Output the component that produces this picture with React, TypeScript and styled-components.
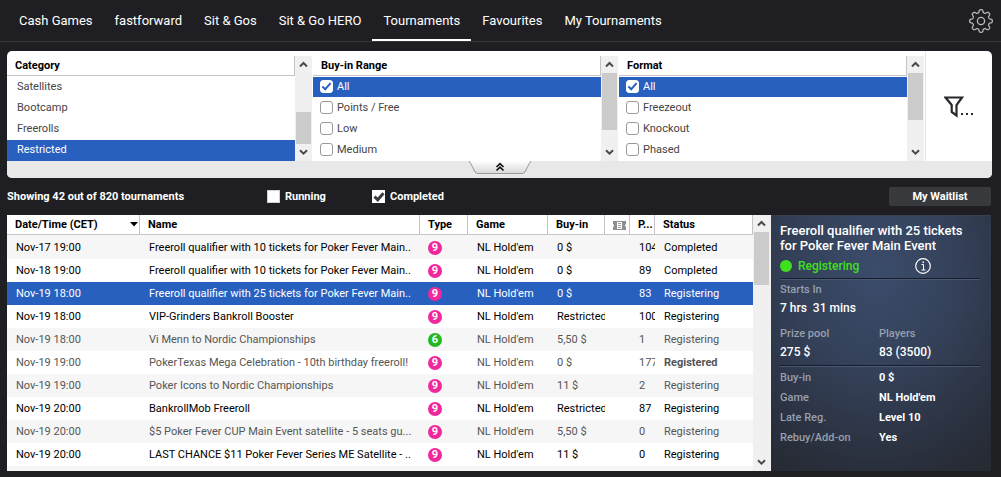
import React from "react";
import styled, { createGlobalStyle, css } from "styled-components";

const GlobalStyle = createGlobalStyle`
  *, *::before, *::after { box-sizing: border-box; }
  body {
    margin: 0;
    background: #1f1f23;
    color: #fff;
    font-family: Roboto, "Liberation Sans", sans-serif;
    font-size: 12px;
  }
  button, input { font: inherit; margin: 0; }
  button { border: 0; padding: 0; background: none; color: inherit; cursor: pointer; }
`;

const blue = "#2860c0";

const Page = styled.div`
  display: flex;
  flex-direction: column;
  height: 100vh;
  padding-bottom: 6px;
`;

/* ---------- navigation ---------- */

const TopBar = styled.header`
  display: flex;
  align-items: stretch;
  justify-content: space-between;
  flex: none;
  height: 42px;
  padding: 0 8px;
  border-bottom: 1px solid #37373b;
`;

const Tabs = styled.nav`
  display: flex;
`;

const Tab = styled.a<{ $active?: boolean }>`
  display: flex;
  align-items: center;
  padding: 1px 11px 0;
  border-bottom: 2px solid ${(p) => (p.$active ? "#fff" : "transparent")};
  color: #fff;
  font-size: 13px;
  text-decoration: none;
  white-space: nowrap;
`;

const IconButton = styled.button`
  display: grid;
  place-items: center;
`;

/* ---------- scroll bar ---------- */

const Bar = styled.div`
  display: flex;
  flex-direction: column;
  flex: none;
  width: 17px;
  padding: 0 1px;
  background: #f0f0f0;
`;

const BarButton = styled.button`
  display: grid;
  place-items: center;
  flex: none;
  height: 17px;
`;

const Track = styled.div<{ $end?: boolean }>`
  display: flex;
  flex: 1;
  flex-direction: column;
  justify-content: ${(p) => (p.$end ? "flex-end" : "flex-start")};
`;

const Thumb = styled.div<{ $size: number }>`
  height: ${(p) => p.$size}px;
  background: #cbcbcb;
`;

const Chevron = ({ down = false }: { down?: boolean }) => (
  <svg width="9" height="7" viewBox="0 0 9 7" aria-hidden="true">
    <path
      d={down ? "M1 1.2 4.5 4.7 8 1.2" : "M1 5.5 4.5 2 8 5.5"}
      fill="none"
      stroke="#4a4a4a"
      strokeWidth="2"
    />
  </svg>
);

function ScrollBar({ size, end }: { size: number; end?: boolean }) {
  return (
    <Bar>
      <BarButton aria-label="Scroll up">
        <Chevron />
      </BarButton>
      <Track $end={end}>
        <Thumb $size={size} />
      </Track>
      <BarButton aria-label="Scroll down">
        <Chevron down />
      </BarButton>
    </Bar>
  );
}

/* ---------- filters ---------- */

const FilterPanel = styled.section`
  flex: none;
  margin: 9px 9px 0 7px;
  border-radius: 5px;
  background: #fff;
  color: #444;
  overflow: hidden;
`;

const FilterColumns = styled.div`
  display: grid;
  grid-template-columns: repeat(3, minmax(0, 1fr)) 67px;
  height: 110px;
`;

const FilterColumn = styled.div`
  display: flex;
  padding: 5px 1px 0 0;
`;

const FilterList = styled.fieldset`
  flex: 1;
  min-width: 0;
  margin: 0;
  padding: 0;
  border: 0;
`;

const FilterTitle = styled.div`
  height: 20px;
  padding-left: 8px;
  border-right: 1px solid #c4c4cc;
  border-bottom: 1px solid #c4c4cc;
  color: #000;
  font-size: 11px;
  font-weight: 700;
  line-height: 19px;
`;

const selectable = css<{ $selected?: boolean }>`
  display: flex;
  align-items: center;
  width: 100%;
  height: 21px;
  background: ${(p) => (p.$selected ? blue : "transparent")};
  color: ${(p) => (p.$selected ? "#fff" : "#444")};
  font-size: 11px;
`;

const CategoryList = styled.div`
  padding-top: 1px;
`;

const CategoryRow = styled.button<{ $selected?: boolean }>`
  ${selectable}
  padding: 0 10px 2px;
`;

const CheckRow = styled.label<{ $selected?: boolean }>`
  ${selectable}
  gap: 4px;
  padding: 0 7px 2px;
  background-clip: padding-box;
  border-top: 1px solid transparent;
`;

const CheckBox = styled.input`
  display: grid;
  place-items: center;
  flex: none;
  appearance: none;
  width: 13px;
  height: 13px;
  border: 1px solid #9a9a9a;
  border-radius: 3px;
  background: #fff;

  &:checked {
    border-color: #fff;
  }
  &:checked::after {
    content: "";
    width: 5px;
    height: 9px;
    border: solid ${blue};
    border-width: 0 2px 2px 0;
    transform: translateY(-1px) rotate(42deg);
  }
`;

const FilterMore = styled.button`
  display: grid;
  place-items: center;
  border-left: 1px solid #e4e4e4;
`;

const FilterFoot = styled.div`
  display: flex;
  justify-content: center;
  height: 17px;
  background: #e8e8e8;
`;

const CollapseButton = styled.button`
  height: 14px;
  line-height: 0;
`;

/* ---------- summary row ---------- */

const SummaryRow = styled.div`
  display: grid;
  grid-template-columns: 260px 105px 1fr auto;
  align-items: center;
  flex: none;
  height: 37px;
  padding: 0 10px 0 7px;
  font-size: 11px;
  font-weight: 700;
`;

const SquareLabel = styled.label`
  display: flex;
  align-items: center;
  gap: 5px;
`;

const SquareBox = styled(CheckBox)`
  border: 1px solid #d0d0d0;
  border-radius: 0;

  &:checked::after {
    width: 6px;
    height: 10px;
    border-color: #3c3c40;
    border-width: 0 3px 3px 0;
  }
`;

const WaitlistButton = styled.button`
  width: 102px;
  height: 19px;
  border-radius: 2px;
  background: #38393d;
  font-weight: 700;
`;

/* ---------- tournament table ---------- */

const Main = styled.main`
  display: grid;
  grid-template-columns: minmax(0, 1fr) 220px;
  flex: 1;
  min-height: 0;
  padding: 0 10px 0 7px;
`;

const TablePane = styled.section`
  display: flex;
  min-height: 0;
  padding-right: 1px;
  background: #f0f0f0;
  overflow: hidden;
`;

const TableScroll = styled.div`
  flex: 1;
  min-width: 0;
  background: #fff;
  overflow: hidden;
`;

const Table = styled.table`
  width: 100%;
  table-layout: fixed;
  border-collapse: separate;
  border-spacing: 0;
`;

const Th = styled.th`
  height: 20px;
  padding: 0 0 0 8px;
  border-right: 1px solid #c4c4cc;
  border-bottom: 1px solid #c4c4cc;
  background: #fff;
  color: #000;
  font-size: 11px;
  font-weight: 700;
  text-align: left;
  white-space: nowrap;
  overflow: hidden;
`;

const TicketHead = styled(Th)`
  padding-top: 2px;
`;

const SortHead = styled.span`
  display: flex;
  align-items: center;
  justify-content: space-between;
  padding-right: 1px;
`;

const Td = styled.td<{ $bold?: boolean }>`
  height: 23px;
  padding: 0 0 0 9px;
  font-size: 11px;
  font-weight: ${(p) => (p.$bold ? 700 : 400)};
  line-height: 21px;
  white-space: nowrap;
  overflow: hidden;
`;

const Tr = styled.tr<{ $tone: "black" | "grey" | "selected" }>`
  color: ${(p) => ({ black: "#000", grey: "#555", selected: "#fff" })[p.$tone]};
  background: ${(p) => (p.$tone === "selected" ? blue : "#fff")};
  &:nth-child(odd) {
    background: ${(p) => (p.$tone === "selected" ? blue : "#f6f6f6")};
  }
  &:first-child > ${Td} {
    height: 24px;
    padding-top: 1px;
  }
`;

const Badge = styled.span<{ $green?: boolean }>`
  display: grid;
  place-items: center;
  width: 14px;
  height: 14px;
  margin-left: -1px;
  border-radius: 50%;
  background: ${(p) => (p.$green ? "#22b822" : "#f0289c")};
  color: #fff;
  font-size: 11px;
  font-weight: 700;
  line-height: 14px;
`;

/* ---------- details ---------- */

const Details = styled.aside`
  padding: 7px 11px 8px 9px;
  border-top: 1px solid #39404d;
  background: radial-gradient(ellipse 190px 230px at 48% 22%, #3b4c6b 0%, #344058 45%, #292f3c 85%, #262a33 100%);
  font-weight: 500;
  overflow: hidden;
`;

const DetailTitle = styled.h2`
  margin: 0;
  font-size: 13px;
  font-weight: 500;
  line-height: 15px;
  white-space: nowrap;
`;

const StateRow = styled.div`
  display: flex;
  align-items: center;
  gap: 6px;
  height: 25px;
  color: #3fe01c;
`;

const Dot = styled.span`
  width: 12px;
  height: 12px;
  border-radius: 50%;
  background: #3fe01c;
`;

const StateText = styled.span`
  width: 111px;
`;

const InfoButton = styled(IconButton)`
  color: #fff;
`;

const Rule = styled.hr`
  height: 2px;
  margin: 0;
  border: 0;
  border-top: 1px solid #171d2b;
  background: #4a5874;
`;

const StatGroup = styled.dl<{ $last?: boolean }>`
  display: grid;
  grid-template-columns: 99px 1fr;
  margin: ${(p) => (p.$last ? "8px 0 4px" : "1px 0 0")};
`;

const Stat = styled.div`
  line-height: 18px;
`;

const Term = styled.dt`
  color: #989fae;
  font-size: 11px;
`;

const Value = styled.dd`
  margin: 0;
  font-size: 12px;
  white-space: pre;
`;

const FactList = styled.dl`
  display: grid;
  grid-template-columns: 99px 1fr;
  margin: 1px 0 0;
  line-height: 20px;
`;

const FactValue = styled(Value)`
  font-size: 11px;
  font-weight: 700;
`;

/* ---------- data ---------- */

const tabs = ["Cash Games", "fastforward", "Sit & Gos", "Sit & Go HERO", "Tournaments", "Favourites", "My Tournaments"];
const categories = ["Satellites", "Bootcamp", "Freerolls", "Restricted"];
const ranges = ["All", "Points / Free", "Low", "Medium"];
const formats = ["All", "Freezeout", "Knockout", "Phased"];

type Tone = "black" | "grey" | "selected";
type Row = [Tone, string, string, number, string, string, string];

const rows: Row[] = [
  ["black", "Nov-17 19:00", "Freeroll qualifier with 10 tickets for Poker Fever Main..", 9, "0 $", "104", "Completed"],
  ["black", "Nov-18 19:00", "Freeroll qualifier with 10 tickets for Poker Fever Main..", 9, "0 $", "89", "Completed"],
  ["selected", "Nov-19 18:00", "Freeroll qualifier with 25 tickets for Poker Fever Main..", 9, "0 $", "83", "Registering"],
  ["black", "Nov-19 18:00", "VIP-Grinders Bankroll Booster", 9, "Restricted", "100", "Registering"],
  ["grey", "Nov-19 18:00", "Vi Menn to Nordic Championships", 6, "5,50 $", "1", "Registering"],
  ["grey", "Nov-19 19:00", "PokerTexas Mega Celebration - 10th birthday freeroll!", 9, "0 $", "177", "Registered"],
  ["grey", "Nov-19 19:00", "Poker Icons to Nordic Championships", 9, "11 $", "2", "Registering"],
  ["black", "Nov-19 20:00", "BankrollMob Freeroll", 9, "Restricted", "87", "Registering"],
  ["grey", "Nov-19 20:00", "$5 Poker Fever CUP Main Event satellite - 5 seats gu...", 9, "5,50 $", "0", "Registering"],
  ["black", "Nov-19 20:00", "LAST CHANCE $11 Poker Fever Series ME Satellite - ..", 9, "11 $", "0", "Registering"],
  ["black", "", "", 9, "", "", ""],
];

const facts = [
  ["Buy-in", "0 $"],
  ["Game", "NL Hold'em"],
  ["Late Reg.", "Level 10"],
  ["Rebuy/Add-on", "Yes"],
];

/* ---------- icons ---------- */

const gearPath = (() => {
  const points: string[] = [];
  for (let i = 0; i <= 160; i++) {
    const a = (i / 160) * Math.PI * 2;
    const wave = Math.tanh(2 * Math.cos(8 * a)) / Math.tanh(2);
    const r = 9.9 + 1.4 * wave;
    points.push(`${(12 + r * Math.sin(a)).toFixed(2)} ${(12 - r * Math.cos(a)).toFixed(2)}`);
  }
  return `M${points.join("L")}Z`;
})();

const GearIcon = () => (
  <svg width="24" height="24" viewBox="0 0 24 24" fill="none" stroke="#b8b8bc" strokeWidth="1.3" aria-hidden="true">
    <path d={gearPath} strokeLinejoin="round" />
    <circle cx="12" cy="12" r="3.6" />
  </svg>
);

const FunnelIcon = () => (
  <svg width="30" height="23" viewBox="0 0 30 23" aria-hidden="true">
    <path d="M1.500 2.500H18L12.500 10V20.500L7.700 17V10Z" fill="none" stroke="#29292d" strokeWidth="2.200" />
    <path d="M17 18h2v2h-2zM22 18h2v2h-2zM27 18h2v2h-2z" fill="#29292d" />
  </svg>
);

const CollapseIcon = () => (
  <svg width="64" height="14" viewBox="0 0 64 14" aria-hidden="true">
    <defs>
      <linearGradient id="handle" x1="0" y1="0" x2="0" y2="1">
        <stop offset="0" stopColor="#fff" />
        <stop offset="1" stopColor="#d8d8d8" />
      </linearGradient>
    </defs>
    <path d="M1 0Q2 1 3 3L7 11Q8 12.500 10 12.500H54Q56 12.500 57 11L61 3Q62 1 63 0Z" fill="url(#handle)" />
    <path d="M1 0Q2 1 3 3L7 11Q8 12.500 10 12.500H54Q56 12.500 57 11L61 3Q62 1 63 0" fill="none" stroke="#999" />
    <path d="M28.500 6 32 2.700 35.500 6M28.500 9.500 32 6.200 35.500 9.500" fill="none" stroke="#111" strokeWidth="1.700" />
  </svg>
);

const TicketIcon = () => (
  <svg width="13" height="9" viewBox="0 0 13 9" aria-label="Ticket" role="img" display="block">
    <path d="M0 0H13V3L12 4V5L13 6V9H0V6L1 5V4L0 3Z" fill="#8f8f8f" />
    <path d="M4 1H9V8H4Z" fill="#fff" />
    <path d="M5 2.500H8M5 4.500H8M5 6.500H8" stroke="#a0a0a0" />
  </svg>
);

const SortIcon = () => (
  <svg width="8" height="5" viewBox="0 0 8 5" aria-hidden="true">
    <path d="M0 0H8L4 4.500Z" fill="#000" />
  </svg>
);

const InfoIcon = () => (
  <svg width="16" height="16" viewBox="0 0 16 16" fill="none" stroke="#fff" aria-hidden="true">
    <circle cx="8" cy="8" r="7.300" strokeWidth="1.200" />
    <path d="M6.500 6.500H8.500V12M6.500 12H10.500" />
    <path d="M7.500 3.500H9V5H7.500Z" fill="#fff" stroke="none" />
  </svg>
);

/* ---------- page ---------- */

function CheckList({ title, items, size }: { title: string; items: string[]; size: number }) {
  return (
    <FilterColumn>
      <FilterList aria-label={title}>
        <FilterTitle>{title}</FilterTitle>
        {items.map((item, i) => (
          <CheckRow key={item} $selected={i === 0}>
            <CheckBox type="checkbox" defaultChecked={i === 0} />
            {item}
          </CheckRow>
        ))}
      </FilterList>
      <ScrollBar size={size} />
    </FilterColumn>
  );
}

export default function App() {
  return (
    <Page>
      <GlobalStyle />
      <TopBar>
        <Tabs>
          {tabs.map((tab) => (
            <Tab key={tab} href="#" $active={tab === "Tournaments"}>
              {tab}
            </Tab>
          ))}
        </Tabs>
        <IconButton aria-label="Settings">
          <GearIcon />
        </IconButton>
      </TopBar>

      <FilterPanel>
        <FilterColumns>
          <FilterColumn>
            <FilterList aria-label="Category">
              <FilterTitle>Category</FilterTitle>
              <CategoryList>
                {categories.map((name) => (
                  <CategoryRow key={name} $selected={name === "Restricted"}>
                    {name}
                  </CategoryRow>
                ))}
              </CategoryList>
            </FilterList>
            <ScrollBar size={32} end />
          </FilterColumn>
          <CheckList title="Buy-in Range" items={ranges} size={57} />
          <CheckList title="Format" items={formats} size={47} />
          <FilterMore aria-label="More filters">
            <FunnelIcon />
          </FilterMore>
        </FilterColumns>
        <FilterFoot>
          <CollapseButton aria-label="Collapse filters">
            <CollapseIcon />
          </CollapseButton>
        </FilterFoot>
      </FilterPanel>

      <SummaryRow>
        <span>Showing 42 out of 820 tournaments</span>
        <SquareLabel>
          <SquareBox type="checkbox" />
          Running
        </SquareLabel>
        <SquareLabel>
          <SquareBox type="checkbox" defaultChecked />
          Completed
        </SquareLabel>
        <WaitlistButton>My Waitlist</WaitlistButton>
      </SummaryRow>

      <Main>
        <TablePane>
          <TableScroll>
            <Table>
              <colgroup>
                <col width="133" />
                <col />
                <col width="48" />
                <col width="80" />
                <col width="57" />
                <col width="25" />
                <col width="25" />
                <col width="98" />
              </colgroup>
              <thead>
                <tr>
                  <Th>
                    <SortHead>
                      Date/Time (CET)
                      <SortIcon />
                    </SortHead>
                  </Th>
                  <Th>Name</Th>
                  <Th>Type</Th>
                  <Th>Game</Th>
                  <Th>Buy-in</Th>
                  <TicketHead>
                    <TicketIcon />
                  </TicketHead>
                  <Th>P...</Th>
                  <Th>Status</Th>
                </tr>
              </thead>
              <tbody>
                {rows.map(([tone, date, name, seats, buyIn, players, status], i) => (
                  <Tr key={i} $tone={tone}>
                    <Td>{date}</Td>
                    <Td>{name}</Td>
                    <Td>
                      <Badge $green={seats === 6}>{seats}</Badge>
                    </Td>
                    <Td>{date && "NL Hold'em"}</Td>
                    <Td>{buyIn}</Td>
                    <Td />
                    <Td>{players}</Td>
                    <Td $bold={status === "Registered"}>{status}</Td>
                  </Tr>
                ))}
              </tbody>
            </Table>
          </TableScroll>
          <ScrollBar size={53} />
        </TablePane>

        <Details>
          <DetailTitle>
            Freeroll qualifier with 25 tickets
            <br />
            for Poker Fever Main Event
          </DetailTitle>
          <StateRow>
            <Dot />
            <StateText>Registering</StateText>
            <InfoButton aria-label="Tournament information">
              <InfoIcon />
            </InfoButton>
          </StateRow>
          <Rule />
          <StatGroup>
            <Stat>
              <Term>Starts In</Term>
              <Value>7 hrs  31 mins</Value>
            </Stat>
          </StatGroup>
          <StatGroup $last>
            <Stat>
              <Term>Prize pool</Term>
              <Value>275 $</Value>
            </Stat>
            <Stat>
              <Term>Players</Term>
              <Value>83 (3500)</Value>
            </Stat>
          </StatGroup>
          <Rule />
          <FactList>
            {facts.map(([term, value]) => (
              <React.Fragment key={term}>
                <Term>{term}</Term>
                <FactValue>{value}</FactValue>
              </React.Fragment>
            ))}
          </FactList>
        </Details>
      </Main>
    </Page>
  );
}
